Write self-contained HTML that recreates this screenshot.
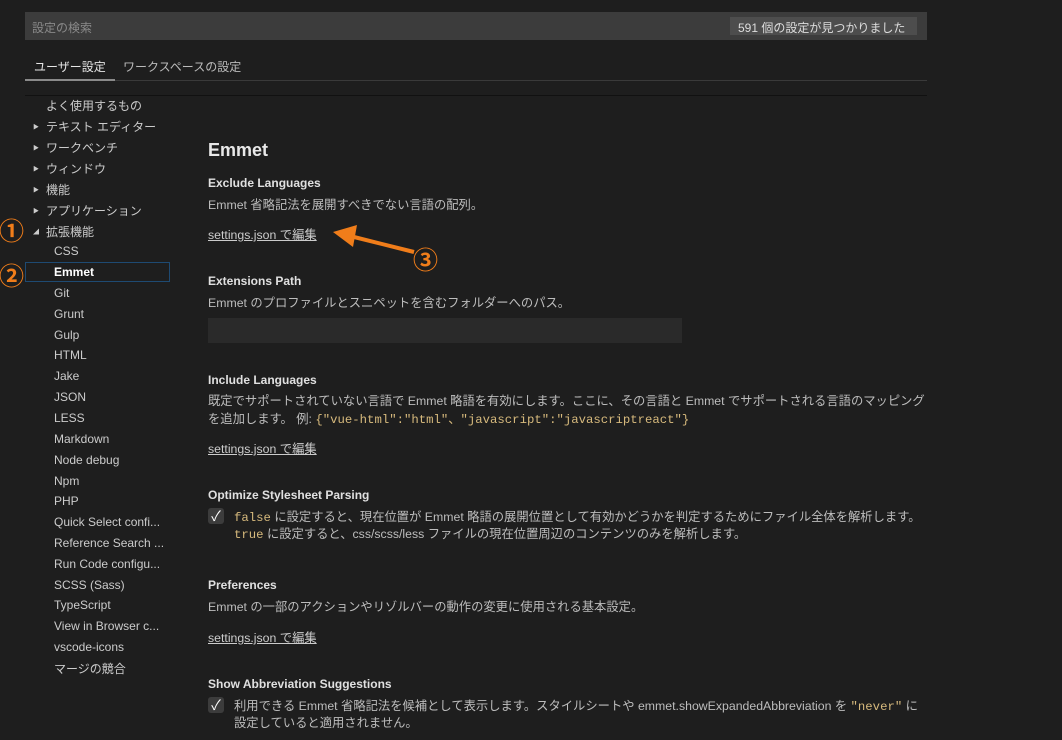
<!DOCTYPE html>
<html><head><meta charset="utf-8"><style>
body{margin:0;width:1062px;height:740px;background:#1e1e1e;overflow:hidden;font-family:"Liberation Sans","Noto Sans CJK JP",sans-serif;color:#ccc;position:relative}
.a{position:absolute;white-space:nowrap}
.t{font-size:12px;color:#ccc}
.h{font-size:12px;font-weight:bold;color:#e0e0e0}
.d{font-size:12.3px;color:#bdbdbd}
.l{font-size:12.3px;color:#ccc;text-decoration:underline}
.c{font-family:"Liberation Mono","Noto Sans CJK JP",monospace;color:#d7ba7d;font-size:12.3px}
.cb{position:absolute;width:16px;height:16px;background:#3c3c3c;border-radius:3px;color:#fff;font-size:14px;line-height:16px;text-align:center}
.o{color:#f07d1a;font-size:25px;font-weight:bold}
.tri{font-size:6px;color:#ccc}
</style></head><body>
<div class="a" style="left:25px;top:12px;width:902px;height:28px;background:#3c3c3c"></div>
<div class="a t" style="left:32px;top:19px;color:#8a8a8a">設定の検索</div>
<div class="a" style="left:730px;top:17px;width:187px;height:18px;background:#4d4d4d"></div>
<div class="a t" style="left:738px;top:19px;color:#ddd">591 個の設定が見つかりました</div>
<div class="a t" style="left:34px;top:58px;color:#e6e6e6">ユーザー設定</div>
<div class="a t" style="left:123px;top:58px;color:#bbb">ワークスペースの設定</div>
<div class="a" style="left:25px;top:80px;width:902px;height:1px;background:#3a3a3a"></div>
<div class="a" style="left:25px;top:79px;width:90px;height:2px;background:#8a8a8a"></div>
<div class="a" style="left:25px;top:95px;width:902px;height:1px;background:#111"></div>

<div class="a t" style="left:46px;top:97px">よく使用するもの</div>
<div class="a tri" style="left:33px;top:122px">▶</div><div class="a t" style="left:46px;top:118px">テキスト エディター</div>
<div class="a tri" style="left:33px;top:143px">▶</div><div class="a t" style="left:46px;top:139px">ワークベンチ</div>
<div class="a tri" style="left:33px;top:164px">▶</div><div class="a t" style="left:46px;top:160px">ウィンドウ</div>
<div class="a tri" style="left:33px;top:185px">▶</div><div class="a t" style="left:46px;top:181px">機能</div>
<div class="a tri" style="left:33px;top:206px">▶</div><div class="a t" style="left:46px;top:202px">アプリケーション</div>
<div class="a tri" style="left:33px;top:227px">◢</div><div class="a t" style="left:46px;top:223px">拡張機能</div>
<div class="a t" style="left:54px;top:244px">CSS</div>
<div class="a" style="left:25px;top:262px;width:143px;height:18px;border:1px solid #1e4a72"></div>
<div class="a t" style="left:54px;top:265px;font-weight:bold;color:#fff">Emmet</div>
<div class="a t" style="left:54px;top:286px">Git</div>
<div class="a t" style="left:54px;top:307px">Grunt</div>
<div class="a t" style="left:54px;top:328px">Gulp</div>
<div class="a t" style="left:54px;top:348px">HTML</div>
<div class="a t" style="left:54px;top:369px">Jake</div>
<div class="a t" style="left:54px;top:390px">JSON</div>
<div class="a t" style="left:54px;top:411px">LESS</div>
<div class="a t" style="left:54px;top:432px">Markdown</div>
<div class="a t" style="left:54px;top:453px">Node debug</div>
<div class="a t" style="left:54px;top:474px">Npm</div>
<div class="a t" style="left:54px;top:494px">PHP</div>
<div class="a t" style="left:54px;top:515px">Quick Select confi...</div>
<div class="a t" style="left:54px;top:536px">Reference Search ...</div>
<div class="a t" style="left:54px;top:557px">Run Code configu...</div>
<div class="a t" style="left:54px;top:578px">SCSS (Sass)</div>
<div class="a t" style="left:54px;top:598px">TypeScript</div>
<div class="a t" style="left:54px;top:619px">View in Browser c...</div>
<div class="a t" style="left:54px;top:640px">vscode-icons</div>
<div class="a t" style="left:54px;top:660px">マージの競合</div>

<div class="a o" style="left:-1px;top:212px">①</div>
<div class="a o" style="left:-1px;top:257px">②</div>
<div class="a o" style="left:413px;top:241px">③</div>
<svg class="a" style="left:330px;top:222px" width="90" height="40"><path d="M84 30 L20 14" stroke="#f07d1a" stroke-width="4"/><path d="M3 10 L27 3 L23 25 Z" fill="#f07d1a"/></svg>

<div class="a" style="left:208px;top:140px;font-size:18px;font-weight:bold;color:#e8e8e8">Emmet</div>
<div class="a h" style="left:208px;top:176px">Exclude Languages</div>
<div class="a d" style="left:208px;top:195px">Emmet 省略記法を展開すべきでない言語の配列。</div>
<div class="a l" style="left:208px;top:225px">settings.json で編集</div>

<div class="a h" style="left:208px;top:274px">Extensions Path</div>
<div class="a d" style="left:208px;top:293px">Emmet のプロファイルとスニペットを含むフォルダーへのパス。</div>
<div class="a" style="left:208px;top:318px;width:474px;height:25px;background:#2a2a2a"></div>

<div class="a h" style="left:208px;top:373px">Include Languages</div>
<div class="a d" style="left:208px;top:391px">既定でサポートされていない言語で Emmet 略語を有効にします。ここに、その言語と Emmet でサポートされる言語のマッピング</div>
<div class="a d" style="left:208px;top:409px">を追加します。 例: <span class="c">{"vue-html":"html"、"javascript":"javascriptreact"}</span></div>
<div class="a l" style="left:208px;top:439px">settings.json で編集</div>

<div class="a h" style="left:208px;top:488px">Optimize Stylesheet Parsing</div>
<div class="cb" style="left:208px;top:508px">✓</div>
<div class="a d" style="left:234px;top:507px"><span class="c">false</span> に設定すると、現在位置が Emmet 略語の展開位置として有効かどうかを判定するためにファイル全体を解析します。</div>
<div class="a d" style="left:234px;top:524px"><span class="c">true</span> に設定すると、css/scss/less ファイルの現在位置周辺のコンテンツのみを解析します。</div>

<div class="a h" style="left:208px;top:578px">Preferences</div>
<div class="a d" style="left:208px;top:597px">Emmet の一部のアクションやリゾルバーの動作の変更に使用される基本設定。</div>
<div class="a l" style="left:208px;top:628px">settings.json で編集</div>

<div class="a h" style="left:208px;top:677px">Show Abbreviation Suggestions</div>
<div class="cb" style="left:208px;top:697px">✓</div>
<div class="a d" style="left:234px;top:696px">利用できる Emmet 省略記法を候補として表示します。スタイルシートや emmet.showExpandedAbbreviation を <span class="c">"never"</span> に</div>
<div class="a d" style="left:234px;top:713px">設定していると適用されません。</div>
</body></html>
